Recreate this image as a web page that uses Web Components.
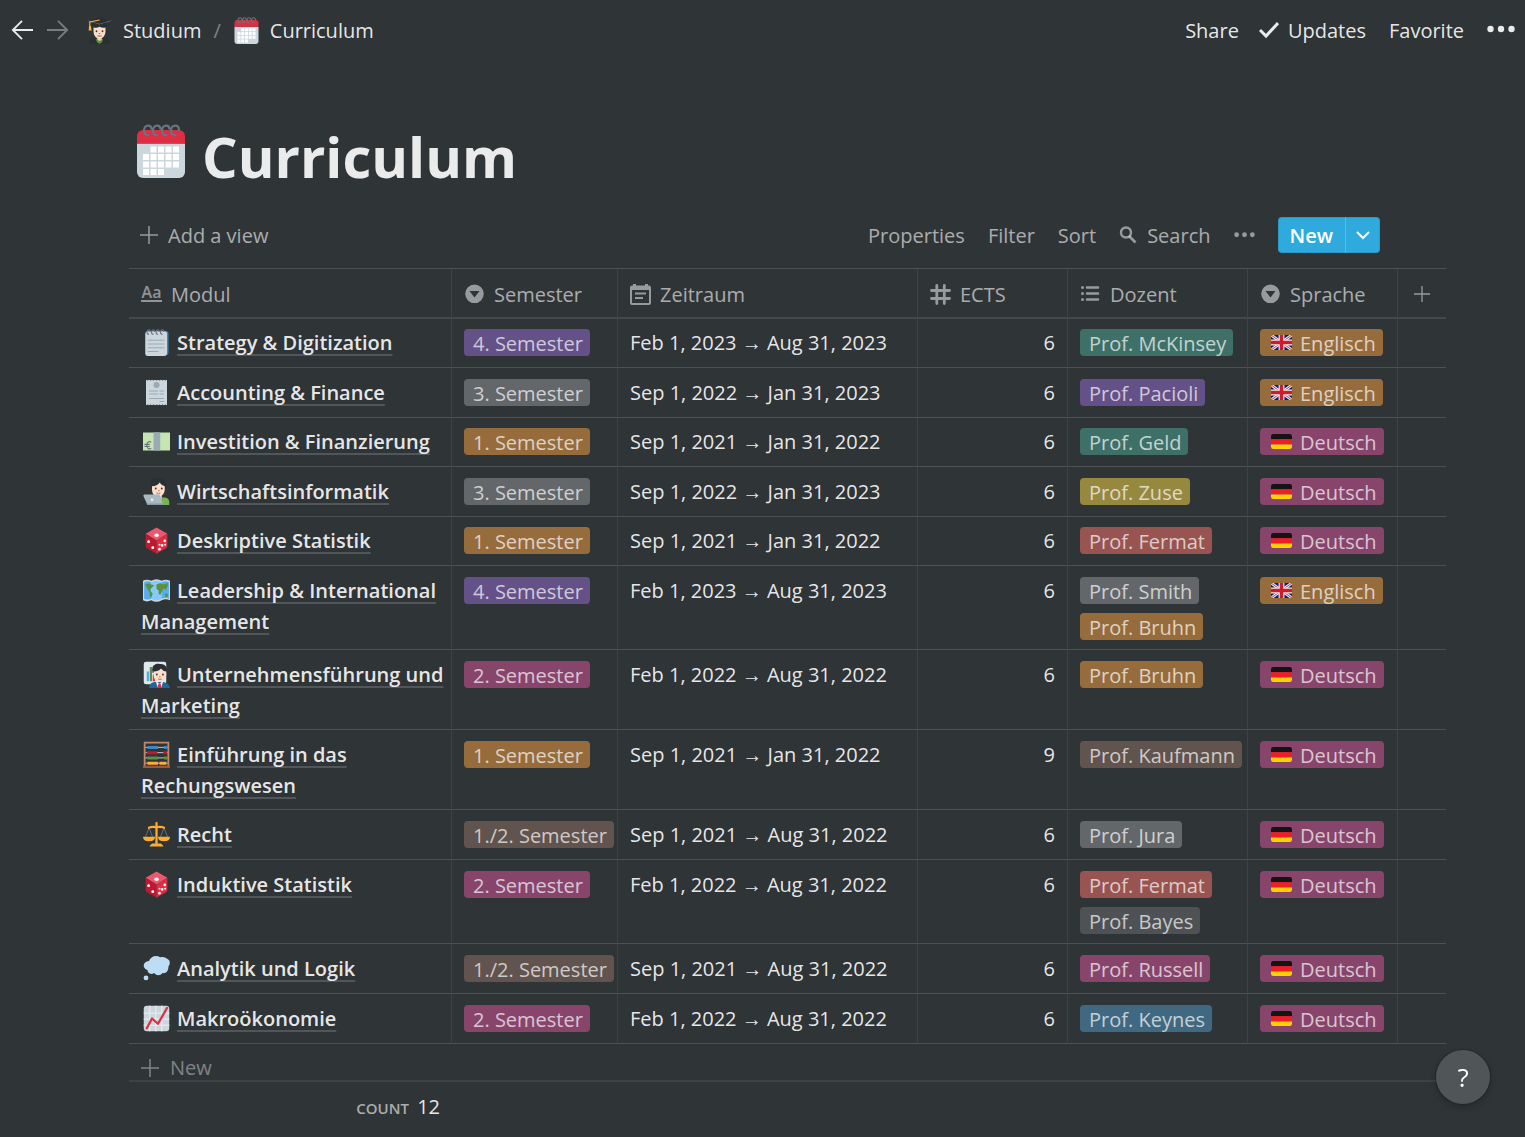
<!DOCTYPE html>
<html lang="en">
<head>
<meta charset="utf-8">
<title>Curriculum</title>
<meta name="viewport" content="width=device-width, initial-scale=1">
<style>
  :root {
    --bg: #2f3437;
    --text: rgba(255, 255, 255, .9);
    --muted: rgba(255, 255, 255, .6);
    --faint: rgba(255, 255, 255, .4);
    --line: rgba(255, 255, 255, .14);
    --line-soft: rgba(255, 255, 255, .07);
    --accent: #2eaadc;
  }
  body {
    margin: 0;
    min-height: 100vh;
    background: var(--bg);
    color: var(--text);
    font: 20px/27px "Open Sans", "Noto Sans", sans-serif;
  }
</style>
</head>
<body>
<curriculum-app></curriculum-app>

<script>
const BASE = `
  *, *::before, *::after { box-sizing: border-box; }
  button { font: inherit; color: inherit; background: none; border: 0; padding: 0; margin: 0; cursor: pointer; }
  a { color: inherit; text-decoration: none; }
`;

const CALENDAR = `
  <path fill="#CCD6DD" d="M2 13h32v19a4 4 0 0 1-4 4H6a4 4 0 0 1-4-4z"/>
  <path fill="#DD2E44" d="M6 4h24a4 4 0 0 1 4 4v5H2V8a4 4 0 0 1 4-4z"/>
  <path fill="#FFF" d="M11 15h4v4h-4zm5 0h4v4h-4zm5 0h4v4h-4zm5 0h4v4h-4zM6 20h4v4H6zm5 0h4v4h-4zm5 0h4v4h-4zm5 0h4v4h-4zm5 0h4v4h-4zM6 25h4v4H6zm5 0h4v4h-4zm5 0h4v4h-4zm5 0h4v4h-4zm5 0h4v4h-4zM6 30h4v4H6zm5 0h4v4h-4zm5 0h4v4h-4z"/>
  <path fill="none" stroke="#66757F" stroke-width="1.500" stroke-linecap="round" d="M9.500 7.500C6 8 5.500 1 9.500 1c1.500 0 2 1 2 2M15.500 7.500C12 8 11.500 1 15.500 1c1.500 0 2 1 2 2M21.500 7.500C18 8 17.500 1 21.500 1c1.500 0 2 1 2 2M27.500 7.500C24 8 23.500 1 27.500 1c1.500 0 2.500 1 2.500 3"/>`;

const DICE = `
  <path fill="#EA596E" d="M18 .5 32.500 9 18 18 3.500 9z"/>
  <path fill="#BE1931" d="M3.500 9 18 18v17.500L5 28q-1.500-1-1.500-3z"/>
  <path fill="#DD2E44" d="M32.500 9 18 18v17.500L31 28q1.500-1 1.500-3z"/>
  <g fill="#FFF"><ellipse cx="18" cy="11" rx="3" ry="2.200"/><circle cx="7.500" cy="19.500" r="1.900"/><circle cx="13" cy="27.500" r="1.900"/>
  <circle cx="22" cy="29.500" r="1.700"/><circle cx="25.500" cy="24.500" r="1.700"/><circle cx="29" cy="18.500" r="1.700"/><circle cx="22" cy="23.500" r="1.300"/><circle cx="29.500" cy="23.500" r="1.300"/></g>`;

const EMOJI = {
  calendar: CALENDAR,
  dice: DICE,
  student: `
    <path fill="#292F33" d="M4 36v-2c0-3 2.500-5 6-5h16c3.500 0 6 2 6 5v2z"/>
    <path fill="#5C913B" d="M13 29.500h10L21 34q-3 3-6 0z"/>
    <path fill="#F3D2A2" d="M15 26h6v4q-3 3.500-6 0z"/>
    <path fill="#292F33" d="M8 9h20v9q0 3-2 4H10q-2-1-2-4z"/>
    <path fill="#F7DECE" d="M10 14q5 1 8-1 4 2 8 1v5c0 6-4 10-8 10s-8-4-8-10z"/>
    <path fill="#66757F" d="m2 5 16-4 16 4-16 6z"/><path fill="#292F33" d="M3 4.500 18 0l15 4.500L18 9zM9 7l9 3 9-3v5q-9-3-18 0z"/>
    <path fill="none" stroke="#FFAC33" stroke-width="1.600" d="m18 4-13 2.500V15"/><path fill="#FFAC33" d="M4 12h2.500l1 6h-4z"/>
    <circle cx="14" cy="19" r="1.200" fill="#662113"/><circle cx="22" cy="19" r="1.200" fill="#662113"/>
    <path fill="none" stroke="#C1694F" stroke-width="1.400" d="M15 25q3 1 6 0M17 22h2"/>`,
  notepad: `
    <path fill="#3B88C3" d="M8 3h23a3 3 0 0 1 3 3v25a4 4 0 0 1-4 4H10z"/>
    <path fill="#CCD6DD" d="M6 3h23q3 0 3 3v26q0 4-4 4H6q-3 0-3-3V7q0-4 3-4z"/>
    <path stroke="#99AAB5" stroke-width="1.600" d="M6.500 15h22M6.500 20h22M6.500 25h22M6.500 30h14"/>
    <path fill="none" stroke="#66757F" stroke-width="1.500" d="M8 7C4 7 5 1 8 1q2 0 1.500 3M14 7c-4 0-3-6 0-6q2 0 1.500 3M20 7c-4 0-3-6 0-6q2 0 1.500 3M26 7c-4 0-3-6 0-6q2 0 1.500 3"/>`,
  receipt: `
    <path fill="#CCD6DD" d="M4 1l2 1 2-1 2 1 2-1 2 1 2-1 2 1 2-1 2 1 2-1 2 1 2-1 2 1 2-1v34l-2-1-2 1-2-1-2 1-2-1-2 1-2-1-2 1-2-1-2 1-2-1-2 1-2-1-2 1z"/>
    <circle cx="18" cy="8" r="4" fill="#99AAB5"/>
    <path stroke="#99AAB5" stroke-width="1.500" d="M8 16h12M22 16h6M8 20h12M22 20h6M8 26h20M22 30h6"/>`,
  euro: `
    <path fill="#C6E5B3" d="M0 6h36v24H0z"/><path fill="#9AAAB4" d="M14 6h9v24h-9z"/>
    <path fill="none" stroke="#67757F" stroke-width="1.500" d="M11 19c-3-2-6 0-6 4s3 6 6 4M2 21.800h7M2 24.500h7"/>`,
  coder: `
    <path fill="#77B255" d="M12 36v-4c0-3 3-6 7-6h10c4 0 6 3 6 6v4z"/>
    <path fill="#F7DECE" d="M17 22h8v5q-4 3-8 0z"/>
    <path fill="#292F33" d="M11 13C8 4 14-1 20 1c8-2 13 4 10 12z"/>
    <path fill="#F7DECE" d="M12 11q7 0 10-5 3 4 7 5v4c0 6-4 10-9 10s-8-4-8-10z"/>
    <circle cx="17" cy="14" r="1.200" fill="#662113"/><circle cx="25" cy="14" r="1.200" fill="#662113"/>
    <path fill="none" stroke="#C1694F" stroke-width="1.300" d="M18 20q3 1.500 5 0M20 17h2"/>
    <path fill="#AAB8C2" d="M2 22h19q1.500 0 2 1.500L27 36H6L.5 24q-.5-2 1.500-2z"/><path fill="#8899A6" d="M5 34h22v2H6z"/><circle cx="12" cy="29" r="2" fill="#E1E8ED"/>`,
  map: `
    <path fill="#CCD6DD" d="M0 5q5-3 11 0 7-4 14 0 5-3 11 0v26q-6-3-11 0-7 4-14 0-6 3-11 0z"/>
    <path fill="#55ACEE" d="M1.500 7q5-3 9.500 0v22q-5 2-9.500 0z"/><path fill="#88C9F9" d="M11 7q7-4 14 0v22q-7 4-14 0z"/><path fill="#55ACEE" d="M25 7q5-3 9.500 0v22q-5-3-9.500 0z"/>
    <path fill="#5C913B" d="M3 10q5-3 8 0l4 1-4 4-2 3 4 4-2 6q-3-3-2-7l-3-5zM18 10l5-2 4 2 6-2v4l-3 5-3-2-2 5-2 4q-3-2-2-6-4-1-3-8zM29 23l4-1v4l-3 1z"/>`,
  office: `
    <rect width="30" height="30" x="1" y="1" rx="3" fill="#E1E8ED"/>
    <path fill="#5C913B" d="M9 8h3v19H9z"/><path fill="#55ACEE" d="M5 14h3v13H5z"/><path fill="#DD2E44" d="M13 18h3v9h-3z"/>
    <path fill="#226699" d="M8 36q0-7 7-8h12q8 1 9 8z"/><path fill="#FFF" d="m17 27 5 3 5-3-3 9h-4z"/><path fill="#DD2E44" d="M20.500 30h3l1 6h-5z"/>
    <path fill="#292F33" d="M13 16C10 6 17 3 22 4c8-1 12 5 9 13z"/>
    <path fill="#F7DECE" d="M14 14q7 0 10-4 3 4 7 4v4c0 6-4 10-9 10s-8-4-8-10z"/>
    <circle cx="18.500" cy="18" r="1.200" fill="#662113"/><circle cx="26.500" cy="18" r="1.200" fill="#662113"/><path fill="none" stroke="#C1694F" stroke-width="1.300" d="M20 24q3 1 5 0M21.500 21h2"/>`,
  abacus: `
    <path stroke="#CCD6DD" stroke-width="1.200" d="M3 8.500h30M3 15.500h30M3 22.500h30M3 29.500h30"/>
    <path fill="#3B88C3" d="M6 6.500h14v4H6zm22 0h4v4h-4z"/><path fill="#BE1931" d="M5 13.500h14v4H5zm22 0h5v4h-5z"/><path fill="#5C913B" d="M6 20.500h14v4H6zm22 0h4v4h-4z"/><path fill="#FFAC33" d="M6 27.500h14v4H6zm16 0h9v4h-9z"/>
    <path fill="none" stroke="#C1876B" stroke-width="2.400" d="M2.200 35V2.200h31.600V35"/><path fill="#A0563F" d="M0 33h36v3H0z"/>`,
  scales: `
    <path fill="none" stroke="#66757F" stroke-width="1.200" d="M8 9 3 22M8 9l5 13M28 9l-5 13M28 9l5 13"/>
    <path fill="#FFAC33" d="M16.500 3a1.500 2 0 0 1 3 0v3.500q5-1 10 1.500l-.5 2.500q-5-2-9.500-1V30H24l3 3v1H9v-1l3-3h4.500V9.500Q12 8.500 7 10.500L6.500 8q5-2.500 10-1.500z"/>
    <path fill="#FFAC33" d="M0 21h16q0 6-8 6t-8-6zM20 21h16q0 6-8 6t-8-6z"/>`,
  thought: `
    <path fill="#BDDDF4" d="M8 8c2-6 9-9 15-5 4-1 7 0 9 2 4 1 5 7 2 10 0 7-4 10-8 9-3 4-8 4-11 0-5 3-9 0-9-4C-1 18-1 9 8 8z"/><circle cx="4" cy="30.500" r="3.200" fill="#BDDDF4"/>`,
  chart: `
    <rect width="34" height="34" x="1" y="1" rx="4" fill="#CCD6DD"/>
    <path stroke="#E1E8ED" stroke-width="2" d="M9 1v34M17 1v34M25 1v34M1 11h34M1 19h34M1 27h34"/>
    <path fill="none" stroke="#DD2E44" stroke-width="3" stroke-linecap="round" stroke-linejoin="round" d="m5 31 7-13 8 7L32 4"/>`,
  gb: `
    <clipPath id="f"><path d="M4 5h28a4 4 0 0 1 4 4v18a4 4 0 0 1-4 4H4a4 4 0 0 1-4-4V9a4 4 0 0 1 4-4z"/></clipPath>
    <g clip-path="url(#f)"><path fill="#00247D" d="M0 5h36v26H0z"/>
    <path stroke="#EEE" stroke-width="5" d="m0 5 36 26M36 5 0 31"/><path stroke="#CF1B2B" stroke-width="1.600" d="m0 5 36 26M36 5 0 31"/>
    <path fill="#EEE" d="M13 5h10v26H13z"/><path fill="#EEE" d="M0 13h36v10H0z"/><path fill="#CF1B2B" d="M15 5h6v26h-6z"/><path fill="#CF1B2B" d="M0 15h36v6H0z"/></g>`,
  de: `
    <path fill="#141414" d="M4 5h28a4 4 0 0 1 4 4v5H0V9a4 4 0 0 1 4-4z"/><path fill="#ED1F24" d="M0 14h36v9H0z"/><path fill="#FFD000" d="M0 23h36v4a4 4 0 0 1-4 4H4a4 4 0 0 1-4-4z"/>`
};

const GLYPH = {
  back: [24, `<path fill="none" stroke="currentColor" stroke-width="2" d="M24 12H2M12 2 2 12l10 10"/>`],
  forward: [24, `<path fill="none" stroke="currentColor" stroke-width="2" d="M0 12h22M12 2l10 10-10 10"/>`],
  check: [20, `<path fill="none" stroke="currentColor" stroke-width="3" d="m1 10 6 6L19 3"/>`],
  dots: [28, `<g fill="currentColor"><circle cx="3.500" cy="13" r="3.200"/><circle cx="14" cy="13" r="3.200"/><circle cx="24.500" cy="13" r="3.200"/></g>`],
  plus: [18, `<path fill="none" stroke="currentColor" stroke-width="1.500" d="M9 0v18M0 9h18"/>`],
  search: [18, `<path fill="none" stroke="currentColor" stroke-width="2.600" d="m10 10 6.500 6.500"/><circle cx="7" cy="6.500" r="5" fill="none" stroke="currentColor" stroke-width="2.400"/>`],
  chevron: [14, `<path fill="none" stroke="currentColor" stroke-width="2" d="m1 4 6 6 6-6"/>`],
  select: [21, `<path fill="currentColor" fill-rule="evenodd" d="M10.500.500a9.300 9.300 0 1 0 0 18.600 9.300 9.300 0 0 0 0-18.600zM5.500 7h10L10.500 13.500z"/>`],
  date: [21, `<path fill="currentColor" fill-rule="evenodd" d="M3 0h3v1.500h9V0h3v1.500h1q2 0 2 2V19q0 2-2 2H2q-2 0-2-2V3.500q0-2 2-2h1zM2 6v12.500q0 .5.500.5h16q.500 0 .500-.5V6zM5 8.500h11v2H5zM5 13h8v2H5z"/>`],
  hash: [21, `<path fill="none" stroke="currentColor" stroke-width="2.800" stroke-linecap="round" d="M6.800 1.500v18M14.300 1.500v18M1.500 6.500h18M1.500 14.500h18"/>`],
  list: [21, `<path stroke="currentColor" stroke-width="2.600" stroke-linecap="round" d="M7 3.500h11M7 9.500h11M7 15.500h11"/><g fill="currentColor"><circle cx="2.500" cy="3.500" r="1.500"/><circle cx="2.500" cy="9.500" r="1.500"/><circle cx="2.500" cy="15.500" r="1.500"/></g>`]
};

/* <emoji-icon name size>: a colour pictogram on a 36-unit grid */
class EmojiIcon extends HTMLElement {
  constructor() { super(); this.attachShadow({ mode: "open" }); }
  connectedCallback() {
    const size = this.getAttribute("size") || 27;
    this.shadowRoot.innerHTML = `<style>:host{display:inline-flex;flex:none} svg{display:block;overflow:visible}</style>
      <svg width="${size}" height="${size}" viewBox="0 0 36 36" aria-hidden="true">${EMOJI[this.getAttribute("name")]}</svg>`;
  }
}

/* <ui-icon name size>: a one-colour interface icon */
class UiIcon extends HTMLElement {
  constructor() { super(); this.attachShadow({ mode: "open" }); }
  connectedCallback() {
    const [box, body] = GLYPH[this.getAttribute("name")];
    const size = this.getAttribute("size") || box;
    this.shadowRoot.innerHTML = `<style>:host{display:inline-flex;flex:none} svg{display:block}</style>
      <svg width="${size}" height="${size}" viewBox="0 0 ${box} ${box}" aria-hidden="true">${body}</svg>`;
  }
}

/* <color-tag color>text</color-tag> */
class ColorTag extends HTMLElement {
  constructor() {
    super();
    this.attachShadow({ mode: "open" }).innerHTML = `<style>
      :host { display: inline-flex; align-items: flex-start; gap: 7px; height: 27px; padding: 0 7px 0 9px; border-radius: 4px;
        color: rgba(255,255,255,.7); white-space: nowrap; line-height: 29px; background: rgba(206,205,202,.2); }
      :host([color=gray]) { background: rgba(151,154,155,.5); }
      :host([color=brown]) { background: rgba(147,114,100,.5); }
      :host([color=orange]) { background: rgba(255,163,68,.5); }
      :host([color=yellow]) { background: rgba(255,220,73,.5); }
      :host([color=green]) { background: rgba(77,171,154,.5); }
      :host([color=blue]) { background: rgba(82,156,202,.5); }
      :host([color=purple]) { background: rgba(154,109,215,.5); }
      :host([color=pink]) { background: rgba(226,85,161,.5); }
      :host([color=red]) { background: rgba(255,115,105,.5); }
      ::slotted(emoji-icon) { align-self: center; margin: 0 1px 0 2px; }
    </style><slot></slot>`;
  }
}

class TopBar extends HTMLElement {
  constructor() {
    super();
    this.attachShadow({ mode: "open" }).innerHTML = `<style>${BASE}
      :host { display: flex; align-items: center; justify-content: space-between; height: 60px; padding: 0 10px 0 11px; }
      nav, .actions, a, button { display: flex; align-items: center; }
      nav { gap: 12px; }
      .arrows { display: flex; gap: 14px; margin-right: 5px; }
      .fwd { opacity: .4; }
      a { gap: 10px; }
      .sep { color: var(--faint); }
      .actions { gap: 23px; }
      .actions button { gap: 9px; }
      .updates { margin-left: -3px; }
    </style>
    <nav aria-label="Breadcrumb">
      <div class="arrows">
        <button aria-label="Back"><ui-icon name="back" size="22"></ui-icon></button>
        <button class="fwd" aria-label="Forward"><ui-icon name="forward" size="22"></ui-icon></button>
      </div>
      <a href="#studium"><emoji-icon name="student"></emoji-icon>Studium</a>
      <span class="sep">/</span>
      <a href="#curriculum"><emoji-icon name="calendar"></emoji-icon>Curriculum</a>
    </nav>
    <div class="actions">
      <button>Share</button>
      <button class="updates"><ui-icon name="check"></ui-icon>Updates</button>
      <button>Favorite</button>
      <button aria-label="More"><ui-icon name="dots"></ui-icon></button>
    </div>`;
  }
}

class PageTitle extends HTMLElement {
  constructor() {
    super();
    this.attachShadow({ mode: "open" }).innerHTML = `<style>
      :host { display: flex; align-items: flex-start; gap: 14px; }
      ::slotted(emoji-icon) { padding-top: 4px; }
      h1 { margin: 0; font-size: 56px; line-height: 72px; font-weight: 700; }
    </style><slot name="icon"></slot><h1><slot></slot></h1>`;
  }
}

class ViewToolbar extends HTMLElement {
  constructor() {
    super();
    this.attachShadow({ mode: "open" }).innerHTML = `<style>${BASE}
      :host { display: flex; align-items: center; justify-content: space-between; color: var(--muted); }
      .group, button { display: flex; align-items: center; }
      .group { gap: 23px; }
      button { gap: 10px; }
      ui-icon { opacity: .85; }
      .split { display: flex; height: 36px; color: #fff; background: var(--accent); border-radius: 4px;
        box-shadow: inset 0 0 0 1px rgba(15,15,15,.1); }
      .split button { padding: 0 12px; font-weight: 600; }
      .split button + button { padding: 0 10px; border-left: 1px solid rgba(255,255,255,.2); }
      .split ui-icon { opacity: 1; }
    </style>
    <button><ui-icon name="plus"></ui-icon>Add a view</button>
    <div class="group">
      <button>Properties</button><button>Filter</button><button>Sort</button>
      <button><ui-icon name="search"></ui-icon>Search</button>
      <button aria-label="More"><ui-icon name="dots" size="21"></ui-icon></button>
      <div class="split"><button>New</button><button aria-label="New from template"><ui-icon name="chevron"></ui-icon></button></div>
    </div>`;
  }
}

const SEM = { "1": ["orange", "1. Semester"], "2": ["pink", "2. Semester"], "3": ["gray", "3. Semester"],
  "4": ["purple", "4. Semester"], "12": ["brown", "1./2. Semester"] };
const LANG = { gb: ["orange", "Englisch"], de: ["pink", "Deutsch"] };

/* icon, title, semester, from, to, ECTS, lecturers, language */
const ROWS = [
  ["notepad", "Strategy & Digitization", "4", "Feb 1, 2023", "Aug 31, 2023", 6, [["green", "McKinsey"]], "gb"],
  ["receipt", "Accounting & Finance", "3", "Sep 1, 2022", "Jan 31, 2023", 6, [["purple", "Pacioli"]], "gb"],
  ["euro", "Investition & Finanzierung", "1", "Sep 1, 2021", "Jan 31, 2022", 6, [["green", "Geld"]], "de"],
  ["coder", "Wirtschaftsinformatik", "3", "Sep 1, 2022", "Jan 31, 2023", 6, [["yellow", "Zuse"]], "de"],
  ["dice", "Deskriptive Statistik", "1", "Sep 1, 2021", "Jan 31, 2022", 6, [["red", "Fermat"]], "de"],
  ["map", "Leadership & International Management", "4", "Feb 1, 2023", "Aug 31, 2023", 6, [["gray", "Smith"], ["orange", "Bruhn"]], "gb"],
  ["office", "Unternehmensführung und Marketing", "2", "Feb 1, 2022", "Aug 31, 2022", 6, [["orange", "Bruhn"]], "de"],
  ["abacus", "Einführung in das Rechungswesen", "1", "Sep 1, 2021", "Jan 31, 2022", 9, [["brown", "Kaufmann"]], "de"],
  ["scales", "Recht", "12", "Sep 1, 2021", "Aug 31, 2022", 6, [["gray", "Jura"]], "de"],
  ["dice", "Induktive Statistik", "2", "Feb 1, 2022", "Aug 31, 2022", 6, [["red", "Fermat"], ["default", "Bayes"]], "de"],
  ["thought", "Analytik und Logik", "12", "Sep 1, 2021", "Aug 31, 2022", 6, [["pink", "Russell"]], "de"],
  ["chart", "Makroökonomie", "2", "Feb 1, 2022", "Aug 31, 2022", 6, [["blue", "Keynes"]], "de"]
];
const esc = s => s.replace(/&/g, "&amp;");

class ModuleTable extends HTMLElement {
  constructor() { super(); this.attachShadow({ mode: "open" }); }
  connectedCallback() {
    const rows = ROWS.map(([icon, title, sem, from, to, ects, profs, lang]) => `<tr>
      <td class="name"><emoji-icon name="${icon}"></emoji-icon><a href="#${icon}">${esc(title)}</a></td>
      <td><color-tag color="${SEM[sem][0]}">${SEM[sem][1]}</color-tag></td>
      <td class="date">${from} → ${to}</td>
      <td class="num">${ects}</td>
      <td><div class="tags">${profs.map(([c, n]) => `<color-tag color="${c}">Prof. ${n}</color-tag>`).join("")}</div></td>
      <td><color-tag color="${LANG[lang][0]}"><emoji-icon name="${lang}" size="21"></emoji-icon>${LANG[lang][1]}</color-tag></td>
      <td></td></tr>`).join("");
    this.shadowRoot.innerHTML = `<style>${BASE}
      :host { display: block; }
      table { width: 100%; table-layout: fixed; border-collapse: separate; border-spacing: 0; border-top: 1px solid var(--line); }
      col.c1 { width: 323px; } col.c2 { width: 166px; } col.c3 { width: 300px; }
      col.c4 { width: 150px; } col.c5 { width: 180px; } col.c6 { width: 150px; }
      th, td { text-align: left; vertical-align: top; padding: 10px 0 9px 12px; border-right: 1px solid var(--line-soft);
        border-bottom: 1px solid var(--line); font-weight: 400; }
      th:last-child, td:last-child { border-right: 0; }
      th { height: 50px; vertical-align: middle; color: var(--muted); border-bottom-width: 2px; border-bottom-color: rgba(255,255,255,.1); padding-top: 6px; padding-bottom: 4px; }
      th:last-child { padding-left: 16px; }
      th button { display: flex; align-items: center; gap: 9px; }
      th ui-icon { opacity: .85; }
      .aa { width: 21px; margin-bottom: 3px; font-size: 16px; line-height: 16px; font-weight: 600; border-bottom: 2px solid; opacity: .8; }
      tbody td { height: 49px; }
      tbody tr:nth-child(even) td, tbody tr:nth-child(n+6) td { height: 50px; padding-top: 11px; }
      tbody td.name { padding-top: 8px; padding-bottom: 8px; line-height: 31px; }
      tbody tr:nth-child(even) td.name, tbody tr:nth-child(n+6) td.name { padding-top: 9px; }
      td.name emoji-icon { vertical-align: -6px; margin: 0 7px 0 2px; }
      td.name a { font-weight: 600; text-decoration: underline; text-decoration-color: #50565a; text-decoration-thickness: 2px;
        text-underline-offset: 4px; text-decoration-skip-ink: none; }
      td color-tag { vertical-align: top; }
      td.num, td.count { text-align: right; padding-right: 12px; }
      td.date { white-space: nowrap; }
      .tags { display: flex; flex-direction: column; align-items: flex-start; gap: 9px; }
      tfoot td { border-right: 0; border-bottom: 0; color: var(--faint); }
      tfoot .add td { height: 38px; padding: 11px 0 0 12px; border-bottom: 2px solid var(--line-soft); }
      tfoot button { display: flex; align-items: center; gap: 11px; line-height: 25px; }
      td.count { padding-top: 11px; }
      .count small { font-size: 15px; font-weight: 600; color: var(--muted); }
      .count b { font-weight: 400; color: var(--text); margin-left: 3px; }
    </style>
    <table>
      <colgroup><col class="c1"><col class="c2"><col class="c3"><col class="c4"><col class="c5"><col class="c6"><col></colgroup>
      <thead><tr>
        <th><button><span class="aa">Aa</span>Modul</button></th>
        <th><button><ui-icon name="select"></ui-icon>Semester</button></th>
        <th><button><ui-icon name="date"></ui-icon>Zeitraum</button></th>
        <th><button><ui-icon name="hash"></ui-icon>ECTS</button></th>
        <th><button><ui-icon name="list"></ui-icon>Dozent</button></th>
        <th><button><ui-icon name="select"></ui-icon>Sprache</button></th>
        <th><button aria-label="Add a property"><ui-icon name="plus" size="16"></ui-icon></button></th>
      </tr></thead>
      <tbody>${rows}</tbody>
      <tfoot>
        <tr class="add"><td colspan="7"><button><ui-icon name="plus"></ui-icon>New</button></td></tr>
        <tr><td class="count"><small>COUNT</small> <b>12</b></td><td colspan="6"></td></tr>
      </tfoot>
    </table>`;
  }
}

class HelpButton extends HTMLElement {
  constructor() {
    super();
    this.attachShadow({ mode: "open" }).innerHTML = `<style>${BASE}
      :host { position: fixed; right: 35px; bottom: 33px; }
      button { width: 54px; height: 54px; border-radius: 50%; background: #505558; font-size: 26px; color: #fff;
        box-shadow: 0 0 0 1px rgba(15,15,15,.2), 0 3px 6px rgba(15,15,15,.3); }
    </style><button aria-label="Help">?</button>`;
  }
}

class CurriculumApp extends HTMLElement {
  constructor() {
    super();
    this.attachShadow({ mode: "open" }).innerHTML = `<style>
      :host { display: block; }
      main { padding: 60px 79px 0 129px; }
      page-title { padding-left: 5px; }
      view-toolbar { margin: 25px 66px 15px 0; padding-left: 11px; }
    </style>
    <top-bar></top-bar>
    <main>
      <page-title><emoji-icon slot="icon" name="calendar" size="54"></emoji-icon>Curriculum</page-title>
      <view-toolbar></view-toolbar>
      <module-table></module-table>
    </main>
    <help-button></help-button>`;
  }
}

customElements.define("emoji-icon", EmojiIcon);
customElements.define("ui-icon", UiIcon);
customElements.define("color-tag", ColorTag);
customElements.define("top-bar", TopBar);
customElements.define("page-title", PageTitle);
customElements.define("view-toolbar", ViewToolbar);
customElements.define("module-table", ModuleTable);
customElements.define("help-button", HelpButton);
customElements.define("curriculum-app", CurriculumApp);
</script>
</body>
</html>
